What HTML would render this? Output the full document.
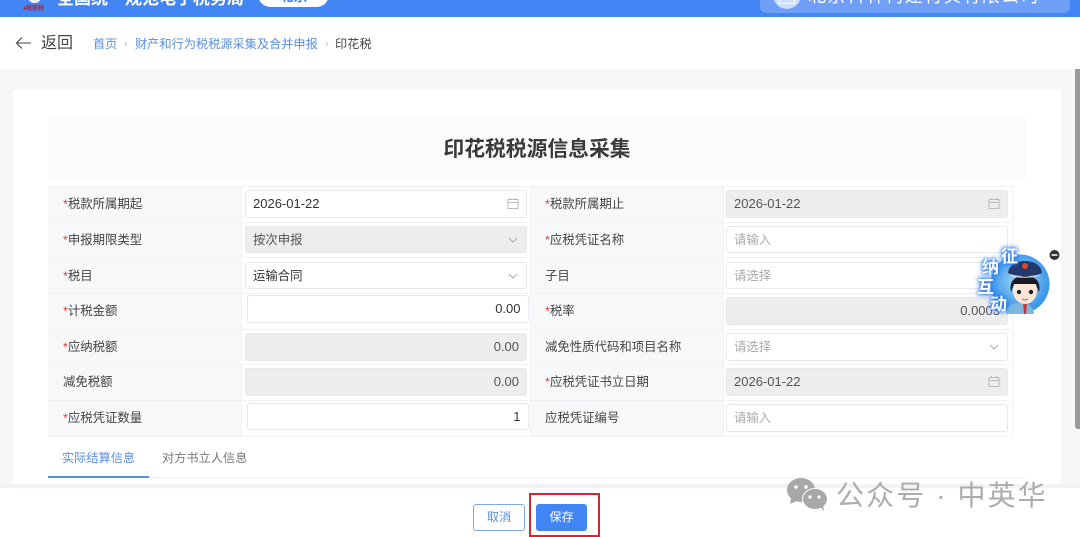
<!DOCTYPE html>
<html lang="zh-CN"><head><meta charset="utf-8"><title>印花税税源信息采集</title>
<style>
*{box-sizing:border-box}
html,body{margin:0;padding:0}
body{width:1080px;height:537px;position:relative;overflow:hidden;background:#f6f7f9;font-family:"Liberation Sans","Noto Sans CJK SC",sans-serif;color:#333}
.a{position:absolute;white-space:nowrap}
.lab{position:absolute;background:#f6f8fa;font-size:12.4px;line-height:20px;color:#444;white-space:nowrap}
.lab i{color:#e33;font-style:normal}
.inp{position:absolute;height:27.5px;border:1px solid #e6e8ec;border-radius:3px;background:#fff;font-size:13px;line-height:25px;padding:0 7px;color:#333;white-space:nowrap}
.cn{font-size:12.4px;line-height:26.5px}
.dis{background:#ededed;border-color:#e8e8e8;color:#555}
.ph{color:#aaa;font-size:12.4px;line-height:26.5px}
.r{text-align:right}
.ic{position:absolute;right:7px;top:6px}
.line{position:absolute;background:#f0f2f5}
.z{font-size:17px;line-height:18px;font-weight:bold;color:#fff;text-shadow:0 0 2px #2a7cf0,0 0 4px #2a7cf0,0 0 6px #2a7cf0}
</style></head><body>
<div class="a" style="left:0;top:0;width:1080px;height:17px;background:#4285f4;overflow:hidden">
<div class="a" style="left:57px;top:-11px;font-size:17px;line-height:20px;font-weight:bold;color:#fff">全国统一规范电子税务局</div>
<div class="a" style="left:258px;top:-18px;width:71px;height:25px;background:#fff;border-radius:13px;font-size:14px;color:#4285f4;text-align:center;line-height:28px;font-weight:bold">北京</div>
<div class="a" style="left:23px;top:5px;width:22px;font-size:6px;line-height:8px;color:#b5212b;font-weight:bold">♦税税税</div>
<div class="a" style="left:28px;top:-9px;width:13px;height:12px;border-radius:6px;background:#eee"></div>
<div class="a" style="left:760px;top:-10px;width:310px;height:23px;background:#6f9ff7;border-radius:6px"></div>
<div class="a" style="left:773px;top:-10px;width:28px;height:19px;background:#cfdffb;border-radius:0 0 14px 14px"></div>
<div class="a" style="left:779px;top:-6px;width:16px;height:10px;border:1.5px solid #fff"></div>
<div class="a" style="left:808px;top:-15px;font-size:18px;line-height:22px;color:#fff;letter-spacing:1.3px">北京科林构建材实有限公司</div>
</div>
<div class="a" style="left:0;top:17px;width:1080px;height:52px;background:#fff"></div>
<svg class="a" style="left:15px;top:36px" width="18" height="14" viewBox="0 0 18 14"><path d="M16 7H1.500M7 1.500L1.500 7L7 12.500" fill="none" stroke="#444" stroke-width="1.100"/></svg>
<div class="a" style="left:41px;top:33px;font-size:16px;line-height:22px;color:#444">返回</div>
<div class="a" style="left:93px;top:34px;font-size:12.2px;line-height:20px;color:#5b8fdc">首页</div>
<div class="a" style="left:124px;top:34px;font-size:11px;line-height:20px;color:#bbb">›</div>
<div class="a" style="left:135px;top:34px;font-size:12.2px;line-height:20px;color:#5b8fdc">财产和行为税税源采集及合并申报</div>
<div class="a" style="left:325px;top:34px;font-size:11px;line-height:20px;color:#bbb">›</div>
<div class="a" style="left:335px;top:34px;font-size:12.2px;line-height:20px;color:#444">印花税</div>

<div class="a" style="left:13px;top:90px;width:1048px;height:398px;background:#fff"></div>
<div class="a" style="left:48px;top:118px;width:978px;height:60px;background:#fafbfc"></div>
<div class="a" style="left:48px;top:120px;width:978px;line-height:60px;font-size:20.8px;font-weight:bold;text-align:center;color:#3a3a3a">印花税税源信息采集</div>

<div class="lab" style="left:48px;top:186px;width:193px;height:250px"></div>
<div class="lab" style="left:531px;top:186px;width:192px;height:250px"></div>
<div class="line" style="left:48px;top:186px;width:964px;height:1px"></div>
<div class="line" style="left:48px;top:221.500px;width:964px;height:1px"></div>
<div class="line" style="left:48px;top:257px;width:964px;height:1px"></div>
<div class="line" style="left:48px;top:293px;width:964px;height:1px"></div>
<div class="line" style="left:48px;top:328.500px;width:964px;height:1px"></div>
<div class="line" style="left:48px;top:364px;width:964px;height:1px"></div>
<div class="line" style="left:48px;top:399.500px;width:964px;height:1px"></div>
<div class="line" style="left:48px;top:436px;width:964px;height:1px"></div>
<div class="line" style="left:241px;top:186px;width:1px;height:250px"></div>
<div class="line" style="left:530px;top:186px;width:1px;height:250px"></div>
<div class="line" style="left:723px;top:186px;width:1px;height:250px"></div>
<div class="line" style="left:1012px;top:186px;width:1px;height:250px"></div>

<div class="lab" style="left:63px;top:194px"><i>*</i>税款所属期起</div>
<div class="lab" style="left:63px;top:230px"><i>*</i>申报期限类型</div>
<div class="lab" style="left:63px;top:266px"><i>*</i>税目</div>
<div class="lab" style="left:63px;top:301px"><i>*</i>计税金额</div>
<div class="lab" style="left:63px;top:337px"><i>*</i>应纳税额</div>
<div class="lab" style="left:63px;top:372px">减免税额</div>
<div class="lab" style="left:63px;top:408px"><i>*</i>应税凭证数量</div>
<div class="lab" style="left:545px;top:194px"><i>*</i>税款所属期止</div>
<div class="lab" style="left:545px;top:230px"><i>*</i>应税凭证名称</div>
<div class="lab" style="left:545px;top:266px">子目</div>
<div class="lab" style="left:545px;top:301px"><i>*</i>税率</div>
<div class="lab" style="left:545px;top:337px">减免性质代码和项目名称</div>
<div class="lab" style="left:545px;top:372px"><i>*</i>应税凭证书立日期</div>
<div class="lab" style="left:545px;top:408px">应税凭证编号</div>

<div class="inp" style="left:245px;top:190px;width:282px">2026-01-22<svg class="ic" width="12" height="13" viewBox="0 0 12 13"><path d="M1 2.500h10v9H1zM1 5.500h10M3.500 1v2M8.500 1v2" fill="none" stroke="#bbb"/></svg></div>
<div class="inp dis cn" style="left:245px;top:225.500px;width:282px">按次申报<svg class="ic" style="top:8px" width="12" height="10" viewBox="0 0 12 10"><path d="M2 3l4 4 4-4" fill="none" stroke="#aaa"/></svg></div>
<div class="inp cn" style="left:245px;top:261.500px;width:282px">运输合同<svg class="ic" style="top:8px" width="12" height="10" viewBox="0 0 12 10"><path d="M2 3l4 4 4-4" fill="none" stroke="#aaa"/></svg></div>
<div class="inp r" style="left:246.500px;top:295px;width:282px">0.00</div>
<div class="inp dis r" style="left:245px;top:333px;width:282px">0.00</div>
<div class="inp dis r" style="left:245px;top:368px;width:282px">0.00</div>
<div class="inp r" style="left:246.500px;top:402.500px;width:282px">1</div>

<div class="inp dis" style="left:726px;top:190px;width:282px">2026-01-22<svg class="ic" width="12" height="13" viewBox="0 0 12 13"><path d="M1 2.500h10v9H1zM1 5.500h10M3.500 1v2M8.500 1v2" fill="none" stroke="#bbb"/></svg></div>
<div class="inp ph" style="left:726px;top:225.500px;width:282px">请输入</div>
<div class="inp ph" style="left:726px;top:261.500px;width:282px">请选择</div>
<div class="inp dis r" style="left:726px;top:297px;width:282px">0.0003</div>
<div class="inp ph" style="left:726px;top:333px;width:282px">请选择<svg class="ic" style="top:8px" width="12" height="10" viewBox="0 0 12 10"><path d="M2 3l4 4 4-4" fill="none" stroke="#aaa"/></svg></div>
<div class="inp dis" style="left:726px;top:368px;width:282px">2026-01-22<svg class="ic" width="12" height="13" viewBox="0 0 12 13"><path d="M1 2.500h10v9H1zM1 5.500h10M3.500 1v2M8.500 1v2" fill="none" stroke="#bbb"/></svg></div>
<div class="inp ph" style="left:726px;top:404px;width:282px">请输入</div>

<div class="a" style="left:62px;top:448px;font-size:12.2px;line-height:20px;color:#5b8fdc">实际结算信息</div>
<div class="a" style="left:162px;top:448px;font-size:12.2px;line-height:20px;color:#777">对方书立人信息</div>
<div class="a" style="left:48px;top:477px;width:978px;height:1px;background:#f0f1f3"></div>
<div class="a" style="left:48px;top:475.500px;width:101px;height:2px;background:#5b8fdc"></div>

<div class="a" style="left:0;top:484px;width:1080px;height:4px;background:#f1f2f5"></div>
<div class="a" style="left:0;top:488px;width:1080px;height:49px;background:#fff"></div>
<div class="a" style="left:473px;top:504px;width:52px;height:27px;border:1px solid #7fa8e8;border-radius:3px;background:#fff;color:#5b8fdc;font-size:12.2px;line-height:25px;text-align:center">取消</div>
<div class="a" style="left:536px;top:504px;width:51px;height:27px;border-radius:3px;background:#4285f4;color:#fff;font-size:12.2px;line-height:27px;text-align:center">保存</div>
<div class="a" style="left:529px;top:493px;width:71px;height:44px;border:2px solid #e0202c"></div>

<div class="a" style="left:1074.500px;top:69px;width:5.500px;height:360px;background:#9a9a9a;border-radius:0 0 0 3px"></div>

<svg class="a" style="left:786px;top:477px" width="42" height="34" viewBox="0 0 42 34"><ellipse cx="15" cy="13" rx="14" ry="12" fill="#a8a8a8"/><path d="M5 21l-1 6 7-3z" fill="#a8a8a8"/><circle cx="10" cy="10" r="1.800" fill="#fff"/><circle cx="20" cy="10" r="1.800" fill="#fff"/><ellipse cx="29" cy="22" rx="12.500" ry="10.500" fill="#a8a8a8" stroke="#fff"/><path d="M34 30l4 4-1-7z" fill="#a8a8a8"/><circle cx="24" cy="20" r="1.600" fill="#fff"/><circle cx="33" cy="20" r="1.600" fill="#fff"/></svg>
<div class="a" style="left:836px;top:478px;font-size:28px;line-height:36px;color:#acacac;letter-spacing:2.100px">公众号 · 中英华</div>

<svg class="a" style="left:975px;top:245px" width="85" height="75" viewBox="975 245 85 75">
<defs><radialGradient id="g" cx="50%" cy="45%" r="55%"><stop offset="0" stop-color="#a8dcf8"/><stop offset="1" stop-color="#2f8fe8"/></radialGradient></defs>
<circle cx="1020" cy="284" r="29.500" fill="url(#g)"/>
<path d="M1006 314c0-8 7-11 14-11s14 3 14 11z" fill="#7fb6dd"/>
<path d="M1023 303h4l-1 11h-2z" fill="#c33"/>
<ellipse cx="1025" cy="291" rx="12" ry="13" fill="#fde6d8"/>
<path d="M1011 292c-2-9 2-16 14-16s16 7 14 16l-3-8h-22z" fill="#1a1a22"/>
<path d="M1008 273c1-8 8-12 17-12s16 4 17 12c-8 4-26 4-34 0z" fill="#24396e"/>
<circle cx="1025" cy="266" r="3" fill="#d8482a"/>
<path d="M1010 275c8 3 22 3 30 0" fill="none" stroke="#cde" stroke-width="1"/>
<circle cx="1019" cy="292" r="2.200" fill="#222"/><circle cx="1031" cy="292" r="2.200" fill="#222"/>
<path d="M1022 299q3 2 6 0" fill="none" stroke="#b55" stroke-width="1"/>
<circle cx="1054.500" cy="255" r="5" fill="#333"/><path d="M1051.500 255h6" stroke="#fff" stroke-width="1.500"/>
</svg>
<div class="a z" style="left:1001px;top:248px">征</div>
<div class="a z" style="left:982px;top:259px">纳</div>
<div class="a z" style="left:977px;top:279px">互</div>
<div class="a z" style="left:990px;top:296px">动</div>
</body></html>
